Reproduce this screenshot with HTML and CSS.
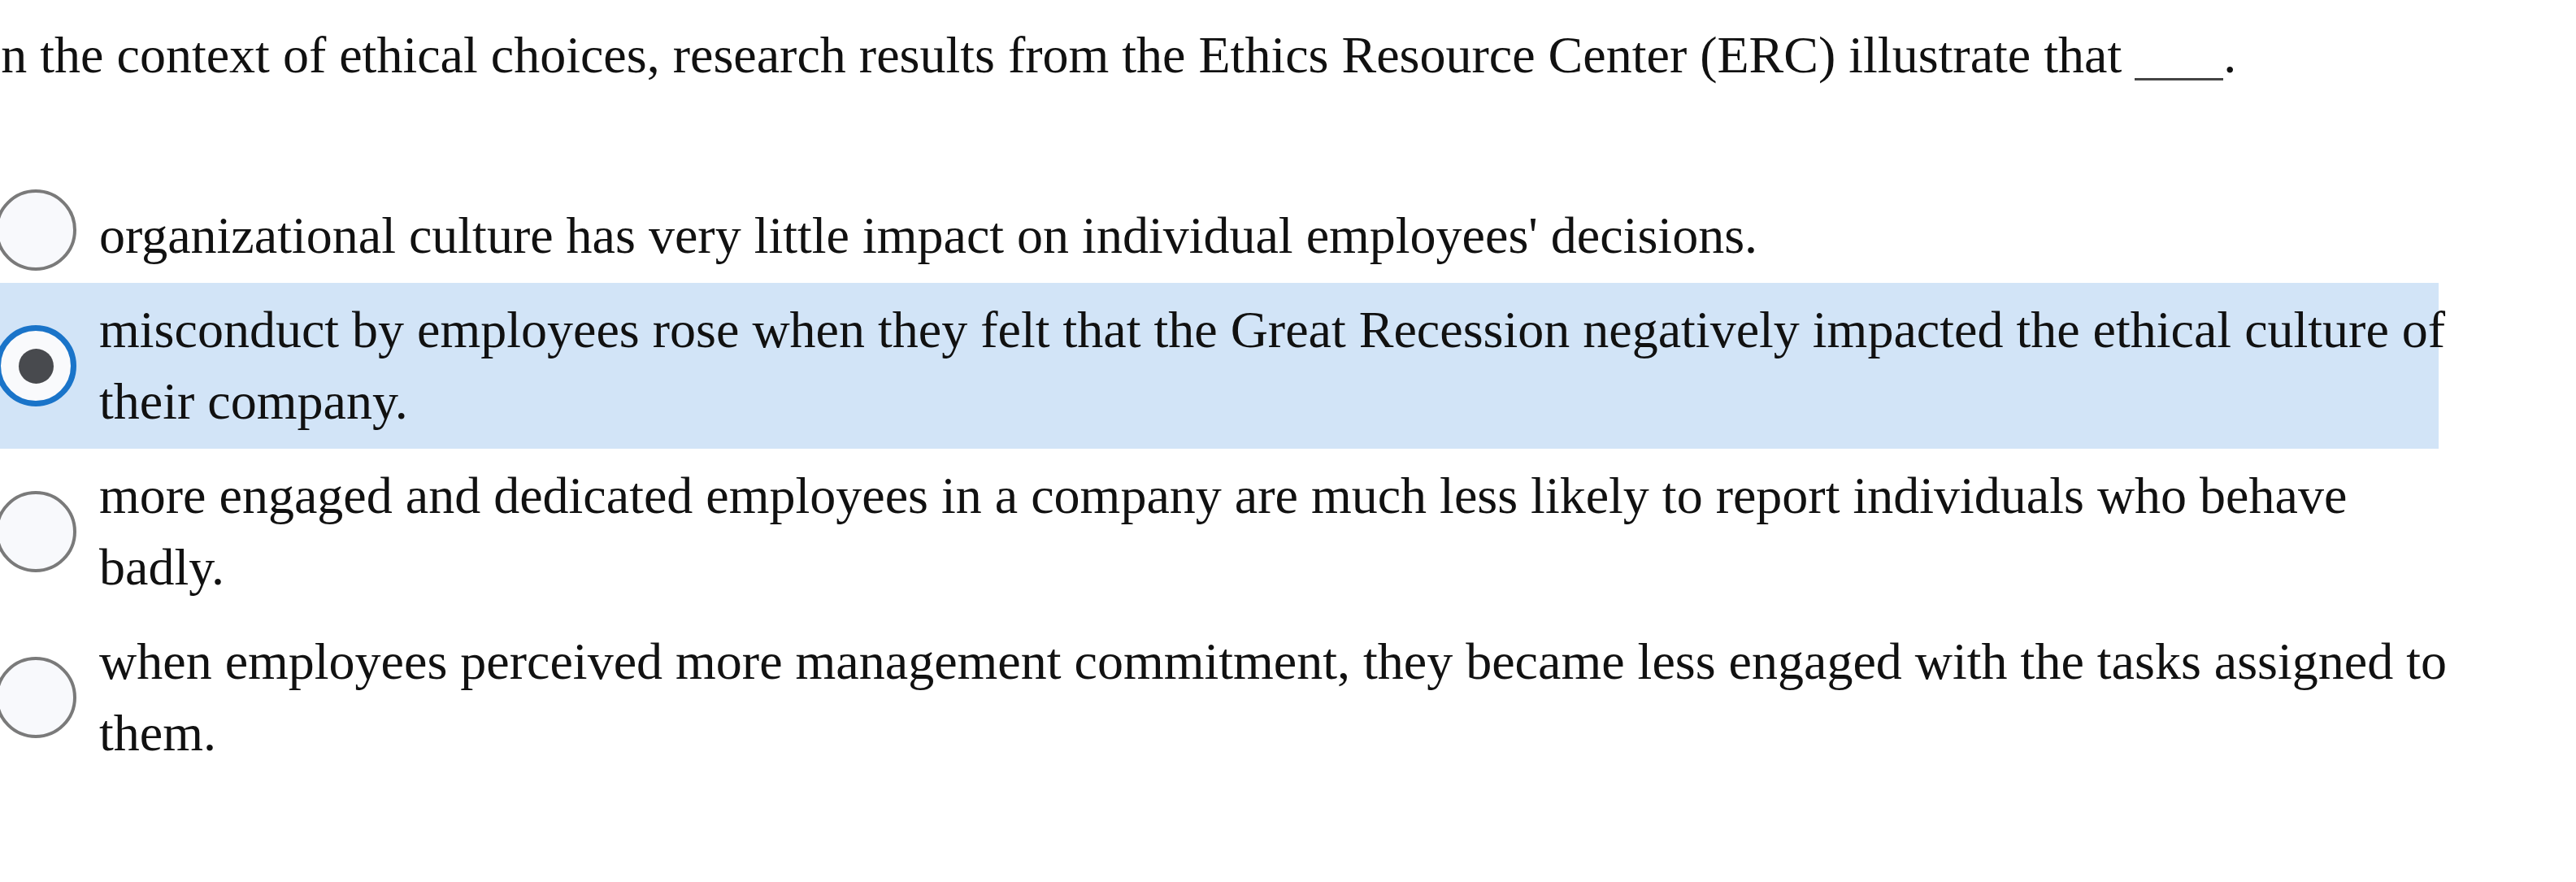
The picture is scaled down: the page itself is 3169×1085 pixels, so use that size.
FILE: index.html
```html
<!DOCTYPE html>
<html lang="en">
<head>
<meta charset="utf-8">
<title>Question</title>
<link rel="stylesheet" href="styles.css">
</head>
<body>
<div class="question">
  <p class="stem">In the context of ethical choices, research results from the Ethics Resource Center (ERC) illustrate that <span class="blank"></span>.</p>
  <div class="options">
    <label class="opt first">
      <span class="radio"></span>
      <span class="txt">organizational culture has very little impact on individual employees' decisions.</span>
    </label>
    <label class="opt selected">
      <span class="radio"><span class="dot"></span></span>
      <span class="txt">misconduct by employees rose when they felt that the Great Recession negatively impacted the ethical culture of their company.</span>
    </label>
    <label class="opt">
      <span class="radio"></span>
      <span class="txt">more engaged and dedicated employees in a company are much less likely to report individuals who behave badly.</span>
    </label>
    <label class="opt">
      <span class="radio"></span>
      <span class="txt">when employees perceived more management commitment, they became less engaged with the tasks assigned to them.</span>
    </label>
  </div>
</div>
</body>
</html>
```

FILE: styles.css
```css
html, body {
  margin: 0;
  padding: 0;
  background: #ffffff;
}
body {
  font-family: "Liberation Serif", "Times New Roman", serif;
  color: #111111;
  font-size: 64px;
}
.question {
  width: 3000px;
}
.stem {
  margin: 0 0 0 -20px;
  padding-top: 28px;
  line-height: 80px;
  font-size: 64px;
  white-space: nowrap;
}
.blank {
  display: inline-block;
  width: 109px;
  height: 10px;
  border-bottom: 3px solid #444;
  vertical-align: -10px;
}
.options {
  margin-top: 124px;
  display: flex;
  flex-direction: column;
}
.opt {
  display: flex;
  align-items: center;
  padding: 14px 0;
}
.opt.selected {
  background: #d2e4f7;
}
.radio {
  flex: none;
  box-sizing: border-box;
  width: 100px;
  height: 100px;
  margin-left: -6px;
  margin-right: 28px;
  border-radius: 50%;
  border: 4px solid #7a7a7a;
  background: #f8f9fc;
  display: flex;
  align-items: center;
  justify-content: center;
}
.first .radio {
  margin-top: -14px;
}
.selected .radio {
  border: 7px solid #1a74c9;
  background: #f9fafc;
}
.dot {
  width: 43px;
  height: 43px;
  border-radius: 50%;
  background: #484a4e;
}
.txt {
  display: block;
  flex: none;
  width: 2910px;
  line-height: 88px;
}
```
